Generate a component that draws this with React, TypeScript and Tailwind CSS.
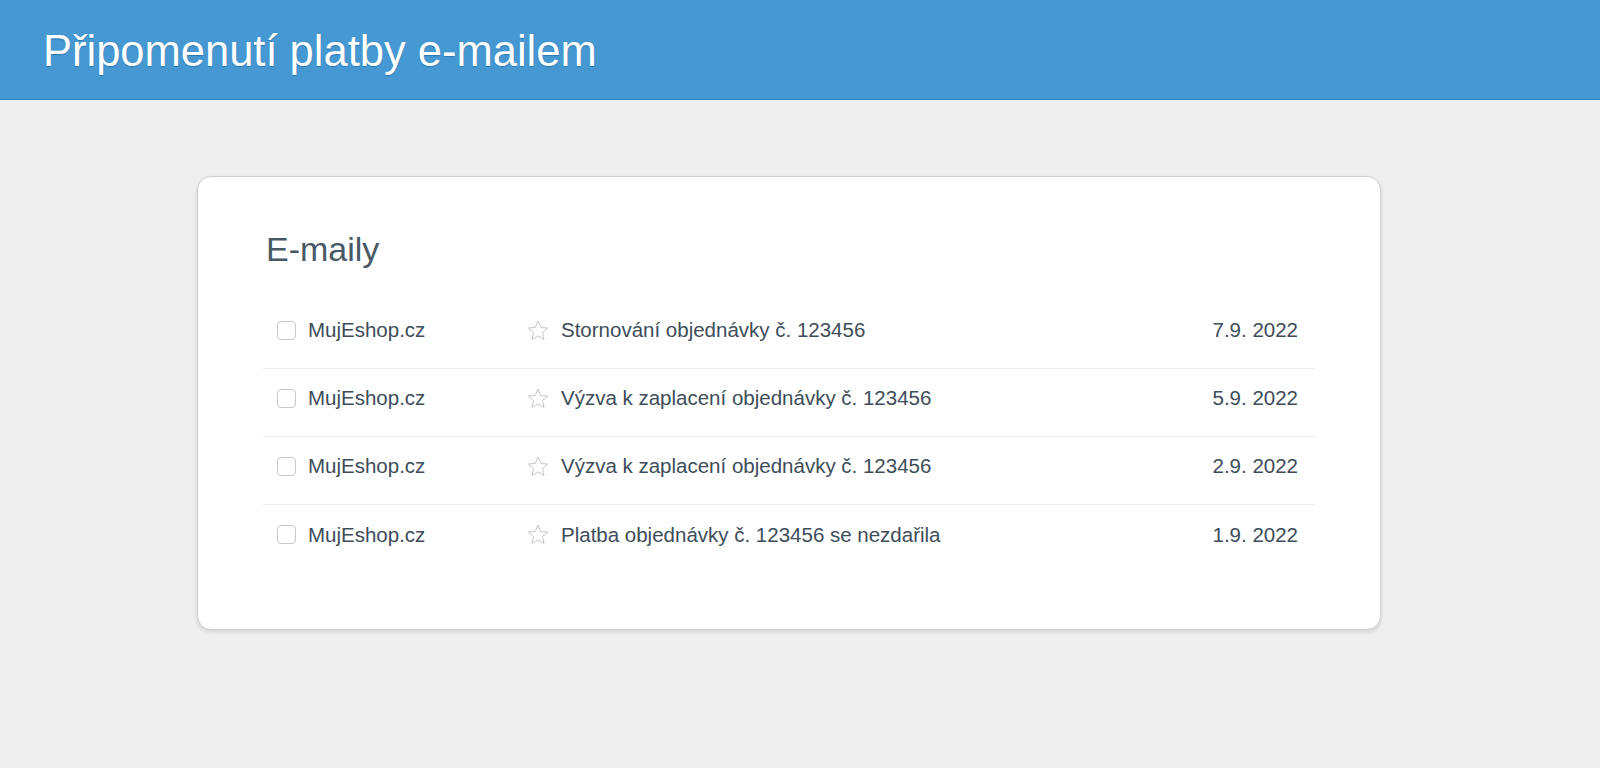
import React from "react";

const rows = [
  { from: "MujEshop.cz", subject: "Stornování objednávky č. 123456", date: "7.9. 2022" },
  { from: "MujEshop.cz", subject: "Výzva k zaplacení objednávky č. 123456", date: "5.9. 2022" },
  { from: "MujEshop.cz", subject: "Výzva k zaplacení objednávky č. 123456", date: "2.9. 2022" },
  { from: "MujEshop.cz", subject: "Platba objednávky č. 123456 se nezdařila", date: "1.9. 2022" },
];

function Star() {
  return (
    <svg width="22" height="21" viewBox="0 0 22 21" className="shrink-0">
      <polygon
        points="11,1.2 13.9,7.5 20.6,8.1 15.5,12.6 17,19.4 11,15.9 5,19.4 6.5,12.6 1.4,8.1 8.1,7.5"
        fill="none"
        stroke="#bdbdbd"
        strokeWidth="0.9"
        strokeLinejoin="miter"
      />
    </svg>
  );
}

export default function App() {
  return (
    <div className="min-h-[768px] bg-[#efefef] font-['Liberation_Sans',Arial,sans-serif]">
      <header className="h-[100px] bg-[#4698d3] border-b border-[#2e83c2] flex items-center pl-[43px] pt-[5px]">
        <h1 className="text-white text-[43.5px] leading-none [text-shadow:0_1px_1px_rgba(0,60,110,0.35)]">
          Připomenutí platby e-mailem
        </h1>
      </header>
      <main className="pt-[76px] pl-[197px]">
        <div className="w-[1184px] h-[454px] bg-white rounded-[14px] border border-[#cfcfcf] shadow-[0_2px_4px_rgba(0,0,0,0.12)] px-[65px] pt-[52px]">
          <h2 className="text-[34px] leading-[40px] text-[#485966] pl-[3px]">E-maily</h2>
          <div className="mt-[32px]">
            {rows.map((r, i) => (
              <div
                key={i}
                className={`h-[68px] flex items-center pb-[9px] text-[20.5px] leading-[24px] text-[#3d4d5a] ${
                  i < rows.length - 1 ? "border-b border-[#ececec]" : ""
                }`}
              >
                <div className="ml-[14px] w-[19px] h-[19px] rounded-[4px] border border-[#c9c9c9] bg-white shrink-0" />
                <div className="ml-[12px] w-[219px] shrink-0">{r.from}</div>
                <Star />
                <div className="ml-[12px] flex-1">{r.subject}</div>
                <div className="mr-[17px] text-right">{r.date}</div>
              </div>
            ))}
          </div>
        </div>
      </main>
    </div>
  );
}
